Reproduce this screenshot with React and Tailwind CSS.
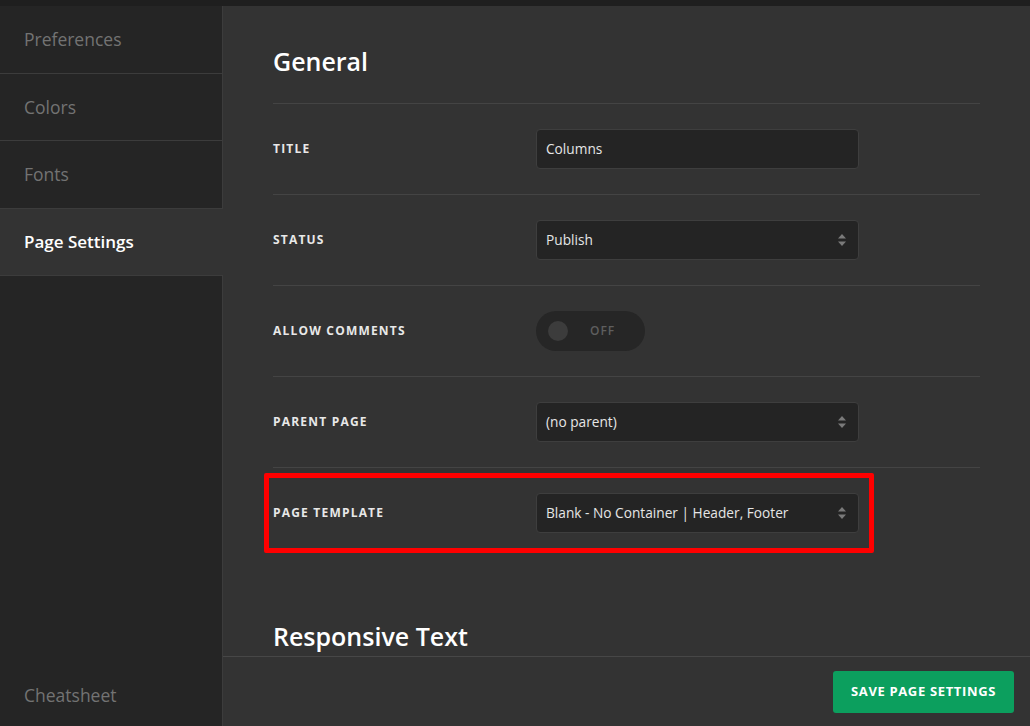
import React from 'react';

const font = { fontFamily: '"Open Sans", "Noto Sans", sans-serif' };

function SortArrows() {
  return (
    <svg width="10" height="14" viewBox="0 0 10 14" className="shrink-0">
      <path d="M5 1 L9 5.5 H1 Z" fill="#7a7a7a" />
      <path d="M5 13 L9 8.5 H1 Z" fill="#7a7a7a" />
    </svg>
  );
}

function Field({ children, select }) {
  return (
    <div className="flex h-[40px] w-[323px] items-center justify-between rounded-[4px] border border-[#3e3e3e] bg-[#242424] pl-[9px] pr-[11px] text-[13.7px] text-[#e6e6e6]">
      <span>{children}</span>
      {select && <SortArrows />}
    </div>
  );
}

function Row({ label, children, highlight }) {
  return (
    <div className="relative flex h-[91px] items-center border-t border-[#444444]">
      <div className="w-[263px] shrink-0 text-[12px] font-bold uppercase tracking-[0.1em] text-[#e8e8e8]">
        {label}
      </div>
      {children}
      {highlight && (
        <div className="pointer-events-none absolute left-[-9px] top-[5px] h-[80px] w-[610px] rounded-[2px] border-[5px] border-[#ff0000]" />
      )}
    </div>
  );
}

const navItems = ['Preferences', 'Colors', 'Fonts', 'Page Settings'];

export default function App() {
  return (
    <div className="flex h-[726px] w-[1030px] flex-col overflow-hidden bg-[#333333]" style={font}>
      <div className="h-[6px] shrink-0 bg-[#1f1f1f]" />
      <div className="flex min-h-0 flex-1">
        <aside className="flex w-[223px] shrink-0 flex-col bg-[#252525]">
          {navItems.map((item) => {
            const active = item === 'Page Settings';
            return (
              <div
                key={item}
                className={
                  active
                    ? 'flex h-[67.5px] items-center border-b border-[#3c3c3c] bg-[#333333] pl-[24px] text-[17px] font-semibold text-white'
                    : 'flex h-[67.5px] items-center border-b border-r border-[#3c3c3c] pl-[24px] text-[17.5px] text-[#737373]'
                }
              >
                {item}
              </div>
            );
          })}
          <div className="flex flex-1 items-end border-r border-[#3c3c3c] pb-[18px] pl-[24px] text-[17.5px] text-[#737373]">
            Cheatsheet
          </div>
        </aside>
        <main className="flex min-w-0 flex-1 flex-col">
          <div className="min-h-0 flex-1 overflow-hidden pl-[50px] pr-[50px]">
            <h2 className="flex h-[97px] items-center pt-[14px] text-[25px] font-semibold text-white">General</h2>
            <Row label="Title">
              <Field>Columns</Field>
            </Row>
            <Row label="Status">
              <Field select>Publish</Field>
            </Row>
            <Row label="Allow Comments">
              <div className="flex h-[40px] w-[109px] items-center rounded-full bg-[#262626] pl-[12px]">
                <div className="h-[20px] w-[20px] rounded-full bg-[#3c3c3c]" />
                <span className="ml-[22px] text-[12px] font-semibold tracking-[0.08em] text-[#5e5e5e]">OFF</span>
              </div>
            </Row>
            <Row label="Parent Page">
              <Field select>(no parent)</Field>
            </Row>
            <Row label="Page Template" highlight>
              <Field select>Blank - No Container | Header, Footer</Field>
            </Row>
            <h2 className="mt-[60px] text-[25px] font-semibold leading-[36px] text-white">Responsive Text</h2>
          </div>
          <footer className="flex h-[70px] shrink-0 items-center justify-end border-t border-[#474747] bg-[#333333] pr-[16px]">
            <button className="h-[42px] w-[181px] rounded-[3px] bg-[#0c9f5e] text-[13px] font-bold uppercase tracking-[0.05em] text-white">
              Save Page Settings
            </button>
          </footer>
        </main>
      </div>
    </div>
  );
}
